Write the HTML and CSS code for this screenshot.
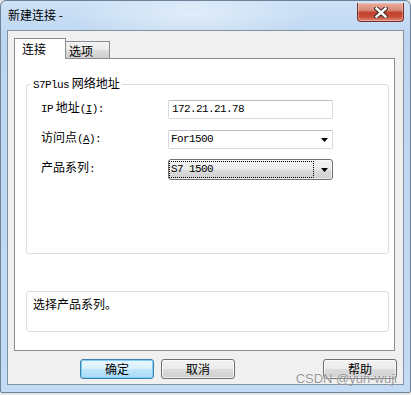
FILE: index.html
```html
<!DOCTYPE html>
<html lang="zh-CN">
<head>
  <meta charset="UTF-8" />
  <title>新建连接</title>
  <link rel="stylesheet" href="styles.css">
</head>
<body>
  <div class="window">
    <div class="titlebar">
      <span class="title">新建连接 -</span>
      <div class="close-btn">
        <svg width="14" height="11" viewBox="0 0 14 11">
          <path d="M2.5 1.5 L11.5 9.5 M11.5 1.5 L2.5 9.5" stroke="#3a2a28" stroke-width="4.4" stroke-linecap="square" fill="none"/>
          <path d="M2.5 1.5 L11.5 9.5 M11.5 1.5 L2.5 9.5" stroke="#ffffff" stroke-width="2.4" stroke-linecap="square" fill="none"/>
        </svg>
      </div>
    </div>

    <div class="client">
      <div class="tabs">
        <div class="tab active">连接</div>
        <div class="tab">选项</div>
      </div>

      <div class="tab-panel">
        <fieldset class="group">
          <legend><span class="latin">S7Plus</span> 网络地址</legend>
          <div class="fields">
            <div class="row">
              <label><span class="latin">IP</span> 地址<span class="latin">(<u>I</u>):</span></label>
              <div class="textbox"><span class="latin">172.21.21.78</span></div>
            </div>
            <div class="row">
              <label>访问点<span class="latin">(<u>A</u>):</span></label>
              <div class="combo">
                <span class="value latin">For1500</span>
                <svg class="arrow" width="7" height="4" viewBox="0 0 7 4"><polygon points="0,0 7,0 3.5,4" fill="#000"/></svg>
              </div>
            </div>
            <div class="row">
              <label>产品系列<span class="latin">:</span></label>
              <div class="combo focused">
                <span class="value latin">S7 1500</span>
                <svg class="arrow" width="7" height="4" viewBox="0 0 7 4"><polygon points="0,0 7,0 3.5,4" fill="#000"/></svg>
              </div>
            </div>
          </div>
        </fieldset>

        <div class="hint">选择产品系列。</div>
      </div>

      <div class="buttons">
        <div class="btn default">确定</div>
        <div class="btn">取消</div>
        <div class="btn help">帮助</div>
      </div>
    </div>

    <div class="watermark">CSDN @yun-wuji</div>
  </div>
</body>
</html>
```

FILE: styles.css
```css
body {
  margin: 0;
  background-color: #e6e6e6;
  font-family: "Noto Sans CJK SC", sans-serif;
  font-size: 12px;
  line-height: 16px;
  color: #000;
}
.window {
  position: relative;
  width: 411px;
  height: 393px;
  box-sizing: border-box;
  border: 1px solid #6d8199;
  border-radius: 6px 6px 2px 2px;
  background: radial-gradient(ellipse 120px 30px at 190px 14px, rgba(255,255,255,0.45), rgba(255,255,255,0) 100%),
              linear-gradient(#cde1f6, #bcd6f1 40px, #c3dbf4);
}
.titlebar {
  display: flex;
  height: 29px;
  padding-left: 7px;
}
.title {
  line-height: 29px;
  margin-top: -1px;
}
.close-btn {
  margin-left: auto;
  margin-right: 6px;
  margin-top: 2px;
  width: 47px;
  height: 19px;
  box-sizing: border-box;
  border: 1px solid #7a3027;
  border-top: none;
  border-radius: 0 0 4px 4px;
  background: linear-gradient(#e9a999 0%, #d98a78 40%, #c2412f 52%, #c84a38 75%, #dd8a76 100%);
  box-shadow: inset 0 0 0 1px rgba(255,255,255,0.3);
  display: flex;
  align-items: center;
  justify-content: center;
}
.client {
  margin: 0 6px;
  height: 355px;
  box-sizing: border-box;
  border: 1px solid #84929f;
  background-color: #f0f0f0;
  padding: 7px 8px 5px 6px;
  display: flex;
  flex-direction: column;
}
.tabs {
  display: flex;
  align-items: flex-end;
  height: 20px;
}
.tab {
  box-sizing: border-box;
  border: 1px solid #898c95;
  border-bottom: none;
  height: 17px;
  width: 45px;
  margin-left: -1px;
  padding-left: 3px;
  line-height: 18px;
  background: linear-gradient(#f3f3f3, #ebebeb 50%, #dcdcdc 51%, #cfcfcf);
}
.tab.active {
  position: relative;
  z-index: 1;
  margin-left: 0;
  width: 52px;
  height: 21px;
  margin-bottom: -1px;
  padding-left: 7px;
  line-height: 20px;
  background: #fff;
}
.tab-panel {
  height: 293px;
  box-sizing: border-box;
  border: 1px solid #898c95;
  background-color: #fff;
  padding: 16px 5px 0 11px;
}
.group {
  margin: 0;
  padding: 0 0 70px 14px;
  border: 1px solid #d5dfe5;
  border-radius: 3px;
  height: 179px;
  box-sizing: border-box;
}
.group legend {
  margin-left: -10px;
  padding: 0 2px;
  line-height: 16px;
}
.fields {
  margin-top: 1px;
}
.row {
  display: flex;
  align-items: center;
  height: 30px;
}
.row label {
  width: 127px;
  margin-top: -2px;
}
.latin {
  font-family: "Liberation Mono", monospace;
  font-size: 11px;
  letter-spacing: -0.6px;
}
.textbox, .combo {
  width: 165px;
  height: 19px;
  box-sizing: border-box;
  border: 1px solid #d6dbe2;
  border-top-color: #b9bec6;
  border-radius: 2px;
  background-color: #fff;
  display: flex;
  align-items: center;
  padding-left: 2px;
}
.textbox {
  padding-left: 3px;
}
.combo .arrow {
  margin-left: auto;
  margin-right: 4px;
  margin-top: 1px;
}
.combo.focused {
  height: 21px;
  border: 1px solid #707070;
  border-radius: 3px;
  padding-left: 0;
  background: linear-gradient(#f2f2f2, #ebebeb 50%, #dddddd 51%, #cfcfcf);
  box-shadow: inset 0 0 0 1px rgba(255,255,255,0.6);
}
.combo.focused .value {
  width: 145px;
  height: 17px;
  box-sizing: border-box;
  border: 1px dotted #000;
  padding-left: 1px;
  line-height: 15px;
}
.hint {
  margin-top: 37px;
  height: 41px;
  box-sizing: border-box;
  border: 1px solid #d5dfe5;
  border-radius: 3px;
  padding: 4px 6px;
}
.buttons {
  display: flex;
  margin-top: 8px;
  margin-right: -2px;
  padding-left: 66px;
}
.btn {
  width: 74px;
  height: 20px;
  box-sizing: border-box;
  border: 1px solid #707070;
  border-radius: 3px;
  background: linear-gradient(#f2f2f2, #ebebeb 50%, #dddddd 51%, #cfcfcf);
  box-shadow: inset 0 0 0 1px rgba(255,255,255,0.7);
  text-align: center;
  line-height: 18px;
  margin-right: 7px;
}
.btn.default {
  border-color: #3c7fb1;
  background: linear-gradient(#eaf6fd, #d9f0fc 50%, #bee6fd 51%, #a7d9f5);
  box-shadow: inset 0 0 0 1px #7fd0f5;
}
.btn.help {
  margin-left: auto;
  margin-right: 0;
}
.watermark {
  position: absolute;
  right: 13px;
  top: 370px;
  font-family: "Liberation Sans", Arial, sans-serif;
  font-size: 13px;
  color: rgba(110, 110, 110, 0.7);
  text-shadow: 0 0 2px rgba(255,255,255,0.8);
}
```
